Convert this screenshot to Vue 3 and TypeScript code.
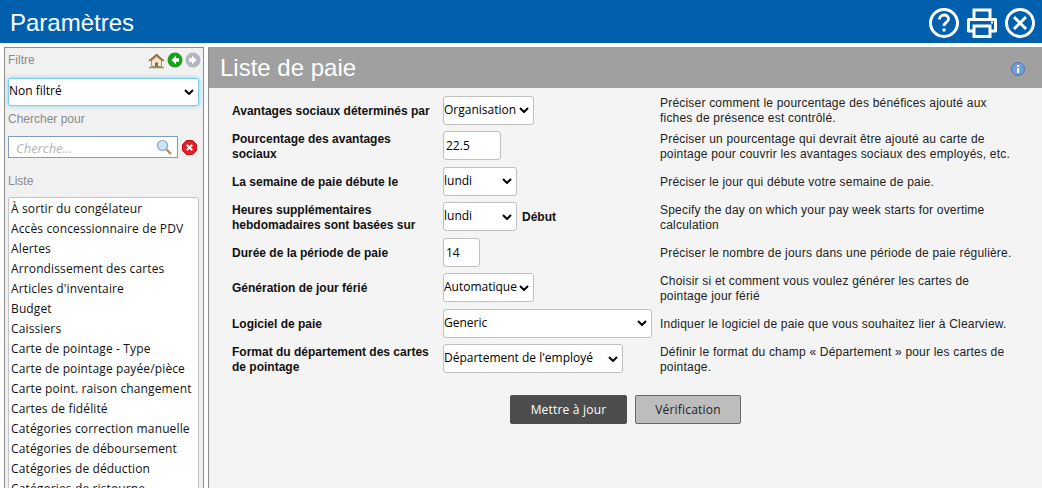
<script setup lang="ts">
interface Row { label: string; desc: string; kind: 'select' | 'input'; value: string; cls: string; suffix?: string }
const rows: Row[] = [
  { label: 'Avantages sociaux déterminés par', desc: 'Préciser comment le pourcentage des bénéfices ajouté aux fiches de présence est contrôlé.', kind: 'select', value: 'Organisation', cls: 'w91' },
  { label: 'Pourcentage des avantages sociaux', desc: 'Préciser un pourcentage qui devrait être ajouté au carte de pointage pour couvrir les avantages sociaux des employés, etc.', kind: 'input', value: '22.5', cls: 'w58' },
  { label: 'La semaine de paie débute le', desc: 'Préciser le jour qui débute votre semaine de paie.', kind: 'select', value: 'lundi', cls: 'w74' },
  { label: 'Heures supplémentaires hebdomadaires sont basées sur', desc: 'Specify the day on which your pay week starts for overtime calculation', kind: 'select', value: 'lundi', cls: 'w74', suffix: 'Début' },
  { label: 'Durée de la période de paie', desc: 'Préciser le nombre de jours dans une période de paie régulière.', kind: 'input', value: '14', cls: 'w37' },
  { label: 'Génération de jour férié', desc: 'Choisir si et comment vous voulez générer les cartes de pointage jour férié', kind: 'select', value: 'Automatique', cls: 'w91' },
  { label: 'Logiciel de paie', desc: 'Indiquer le logiciel de paie que vous souhaitez lier à Clearview.', kind: 'select', value: 'Generic', cls: 'w209' },
  { label: 'Format du département des cartes de pointage', desc: 'Définir le format du champ « Département » pour les cartes de pointage.', kind: 'select', value: "Département de l'employé", cls: 'w180' },
]
const items: string[] = [
  'À sortir du congélateur', 'Accès concessionnaire de PDV', 'Alertes', 'Arrondissement des cartes',
  "Articles d'inventaire", 'Budget', 'Caissiers', 'Carte de pointage - Type', 'Carte de pointage payée/pièce',
  'Carte point. raison changement', 'Cartes de fidélité', 'Catégories correction manuelle',
  'Catégories de déboursement', 'Catégories de déduction', 'Catégories de ristourne',
]
</script>

<template>
  <div class="page">
    <header class="top">
      <h1>Paramètres</h1>
      <div class="top-icons">
        <svg width="32" height="32" viewBox="0 0 32 32" fill="none" stroke="#fff" stroke-width="3">
          <circle cx="16" cy="16" r="13.5" />
          <path d="M11.5 12.5c0-2.8 2-4.5 4.6-4.5s4.4 1.700 4.400 3.900c0 3.500-4.500 3.600-4.500 7.100" stroke-width="2.800" />
          <path d="M16 21.500v3" stroke-width="3" />
        </svg>
        <svg width="32" height="32" viewBox="0 0 32 32" fill="none" stroke="#fff" stroke-width="3">
          <path d="M8 12V3h16v9" />
          <path d="M8 24H2.500V12.500h27V24H24" stroke-linejoin="round" />
          <path d="M8 19h16v10.500H8z" />
          <path d="M25 15.500h2" stroke-width="2" />
        </svg>
        <svg width="32" height="32" viewBox="0 0 32 32" fill="none" stroke="#fff" stroke-width="3">
          <circle cx="16" cy="16" r="13.500" />
          <path d="M10 10l12 12M22 10L10 22" />
        </svg>
      </div>
    </header>

    <div class="columns">
      <aside class="side">
        <div class="side-head">
          <span class="side-label">Filtre</span>
          <div class="nav-icons">
            <svg width="17" height="17" viewBox="0 0 17 16">
              <path d="M1 8.500 8.500 2 16 8.500" fill="#c89a62" stroke="#8a5c2c" stroke-width="1.200" />
              <path d="M3.500 8v6h10V8L8.500 4z" fill="#f3e6cf" stroke="#9a7a50" stroke-width=".8" />
              <rect x="7" y="10" width="3" height="4" fill="#7c6a58" />
              <path d="M1 15h15" stroke="#6aa84f" stroke-width="1.500" />
            </svg>
            <svg width="16" height="16" viewBox="0 0 16 16">
              <circle cx="8" cy="8" r="7.500" fill="#19a219" />
              <path d="M9 3.500 4.500 8 9 12.500V9.800h3V6.200H9z" fill="#fff" />
            </svg>
            <svg width="16" height="16" viewBox="0 0 16 16">
              <circle cx="8" cy="8" r="7.500" fill="#b4b4c4" />
              <path d="M7 3.500 11.500 8 7 12.500V9.800H4V6.200h3z" fill="#fff" />
            </svg>
          </div>
        </div>
        <select class="filter"><option>Non filtré</option></select>
        <div class="side-label search-label">Chercher pour</div>
        <div class="search-row">
          <div class="search">
            <input type="text" placeholder="Cherche..." />
            <svg width="16" height="16" viewBox="0 0 16 16">
              <circle cx="6.500" cy="6.500" r="5" fill="#cfe3f7" stroke="#8fa9c4" stroke-width="1.200" />
              <path d="M10.500 10.500 15 15" stroke="#b08a5a" stroke-width="2.200" />
            </svg>
          </div>
          <svg width="15" height="15" viewBox="0 0 15 15">
            <path d="M4.500.5h6l4 4v6l-4 4h-6l-4-4v-6z" fill="#e11f26" stroke="#c0141a" />
            <path d="M4.700 4.700l5.600 5.600M10.300 4.700l-5.600 5.600" stroke="#fff" stroke-width="2.200" />
          </svg>
        </div>
        <div class="side-label list-label">Liste</div>
        <ul class="list">
          <li v-for="item in items" :key="item">{{ item }}</li>
        </ul>
      </aside>

      <main class="main">
        <div class="title-bar">
          <h2>Liste de paie</h2>
          <svg class="info" width="14" height="14" viewBox="0 0 14 14">
            <circle cx="7" cy="7" r="6.500" fill="#6f9fd8" stroke="#4f74ad" />
            <rect x="6" y="6" width="2.200" height="5" fill="#fff" />
            <rect x="6" y="3" width="2.200" height="2" fill="#fff" />
          </svg>
        </div>
        <div class="body">
          <div class="form">
            <template v-for="row in rows" :key="row.label">
              <label class="lbl">{{ row.label }}</label>
              <div class="ctrl">
                <select v-if="row.kind === 'select'" :class="row.cls"><option>{{ row.value }}</option></select>
                <input v-else type="text" :class="row.cls" :value="row.value" />
                <b v-if="row.suffix" class="suffix">{{ row.suffix }}</b>
              </div>
              <p class="desc">{{ row.desc }}</p>
            </template>
          </div>
          <div class="actions">
            <button class="btn primary">Mettre à jour</button>
            <button class="btn secondary">Vérification</button>
          </div>
        </div>
      </main>
    </div>
  </div>
</template>

<style>
html, body { margin: 0; height: 488px; overflow: hidden; background: #fff; }
</style>

<style scoped>
.page { width: 1042px; height: 488px; overflow: hidden; display: flex; flex-direction: column; font-family: "Liberation Sans", Arial, sans-serif; }
.top { height: 43px; flex: none; background: #0060ae; display: flex; align-items: center; justify-content: space-between; padding: 2px 6px 0 10px; box-sizing: border-box; }
.top h1 { margin: 0; color: #fff; font-size: 24px; font-weight: 400; }
.top-icons { display: flex; gap: 6px; align-items: center; }
.columns { flex: 1; display: flex; gap: 4px; padding: 4px 0 0 4px; min-height: 0; }
.side { width: 200px; box-sizing: border-box; border: 1px solid #8c8c8c; border-bottom: 0; background: #f1f1f1; padding: 0 3px; overflow: hidden; flex: none; }
.side-head { display: flex; justify-content: space-between; align-items: center; height: 22px; padding-top: 1px; }
.side-label { color: #8a8a8a; font-size: 12px; }
.nav-icons { display: flex; align-items: center; gap: 2px; margin-right: -1px; }
select {
  appearance: none;
  background-color: #fff;
  background-image: url("data:image/svg+xml,%3Csvg xmlns='http://www.w3.org/2000/svg' width='10' height='6' viewBox='0 0 10 6'%3E%3Cpath d='M1 1l4 4 4-4' fill='none' stroke='%23000' stroke-width='2'/%3E%3C/svg%3E");
  background-repeat: no-repeat;
  background-position: right 4px center;
}
.filter { display: block; width: 191px; height: 28px; box-sizing: border-box; margin-top: 7px; border: 1px solid #7fcdea; border-radius: 2px; box-shadow: 0 0 4px #7fd0f0; font: 12px "Open Sans", sans-serif; color: #000; padding: 0 0 3px; }
.search-label { margin-top: 4px; line-height: 18px; }
.search-row { display: flex; align-items: center; gap: 4px; margin-top: 8px; }
.search { width: 170px; height: 22px; box-sizing: border-box; border: 1px solid #7f9fc0; background: #fff; display: flex; align-items: center; padding-right: 5px; }
.search input { flex: 1; min-width: 0; border: 0; outline: 0; padding: 2px 0 0 7px; font: italic 13px "Open Sans", sans-serif; background: transparent; }
.search input::placeholder { color: #b5b5b5; }
.list-label { margin-top: 14px; line-height: 18px; }
.list { list-style: none; margin: 7px 0 0; padding: 1px 0 0 2px; width: 191px; box-sizing: border-box; border: 1px solid #c4c4c4; border-radius: 2px; background: #fff; }
.list li { height: 20px; font: 12px/20px "Open Sans", sans-serif; letter-spacing: .13px; color: #111; white-space: nowrap; }
.main { flex: 1; min-width: 0; border-left: 1px solid #8c8c8c; background: #f4f4f4; }
.title-bar { height: 41px; background: #a0a0a0; display: flex; align-items: center; justify-content: space-between; padding: 0 17px 0 11px; }
.title-bar h2 { margin: 0; color: #fff; font-size: 24px; font-weight: 400; }
.info { margin-top: 2px; }
.body { padding: 7px 26px 0 23px; }
.form { display: grid; grid-template-columns: 211px 209px 1fr; grid-auto-rows: 30px; row-gap: 5.5px; align-items: center; }
.lbl { font-size: 12px; font-weight: 700; color: #111; line-height: 15px; padding: 2px 10px 0 0; }
.ctrl { display: flex; align-items: center; gap: 5px; }
.ctrl select, .ctrl input { height: 29px; box-sizing: border-box; border: 1px solid #c0c0c0; border-radius: 3px; font: 12px "Open Sans", sans-serif; color: #000; padding: 0; }
.ctrl select { padding-bottom: 2px; }
.ctrl input { padding-left: 2px; background: #fff; }
.suffix { font-size: 12px; color: #111; }
.desc { margin: 0 0 0 8px; padding-top: 2px; font-size: 12px; line-height: 15px; letter-spacing: .2px; color: #222; }
.w91 { width: 91px; } .w58 { width: 58px; } .w74 { width: 74px; } .w37 { width: 37px; } .w209 { width: 209px; } .w180 { width: 180px; }
.actions { display: flex; justify-content: center; gap: 8px; margin: 21px 0 0; padding-left: 3px; }
.btn { height: 29px; box-sizing: border-box; border-radius: 2px; font: 12px "Open Sans", sans-serif; letter-spacing: .2px; padding: 0; }
.primary { width: 117px; background: #4d4d4d; color: #fff; border: 1px solid #4d4d4d; }
.secondary { width: 106px; background: #bdbdbd; color: #222; border: 1px solid #666; }
</style>
